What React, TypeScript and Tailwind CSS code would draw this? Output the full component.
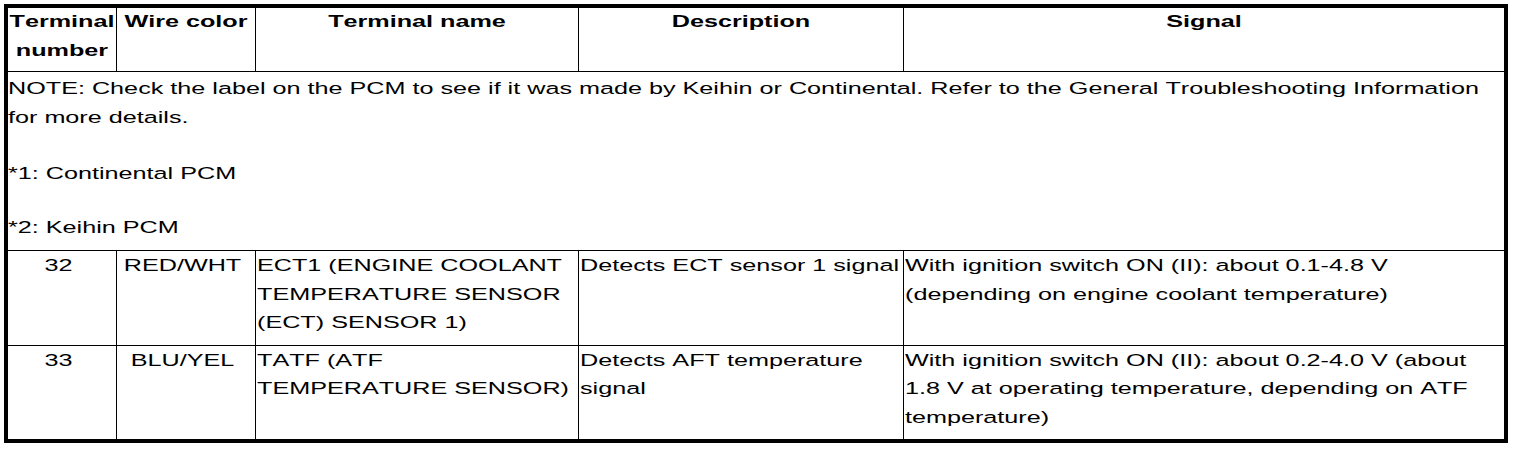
import type { ReactNode } from 'react'

type Row = {
  number: string
  wire: string
  name: string
  description: string
  signal: string
}

const rows: Row[] = [
  {
    number: '32',
    wire: 'RED/WHT',
    name: 'ECT1 (ENGINE COOLANT TEMPERATURE SENSOR (ECT) SENSOR 1)',
    description: 'Detects ECT sensor 1 signal',
    signal: 'With ignition switch ON (II): about 0.1-4.8 V (depending on engine coolant temperature)',
  },
  {
    number: '33',
    wire: 'BLU/YEL',
    name: 'TATF (ATF TEMPERATURE SENSOR)',
    description: 'Detects AFT temperature signal',
    signal:
      'With ignition switch ON (II): about 0.2-4.0 V (about 1.8 V at operating temperature, depending on ATF temperature)',
  },
]

// the manual's text is printed wide, so each cell's text is laid out narrow and stretched back out
function Wide({ children, className = '' }: { children: ReactNode; className?: string }) {
  return (
    <div className={`w-[calc(100%/1.465)] origin-top-left scale-x-[1.465] ${className}`}>
      {children}
    </div>
  )
}

function HeadCell({ children, first = false }: { children: ReactNode; first?: boolean }) {
  return (
    <div className={`pb-[7px] ${first ? '' : 'border-l border-black'}`}>
      <Wide className="-mt-px text-center font-bold">{children}</Wide>
    </div>
  )
}

function Cell({
  children,
  first = false,
  center = false,
}: {
  children: ReactNode
  first?: boolean
  center?: boolean
}) {
  return (
    <div
      className={`border-t border-black pb-[8px] ${first ? '' : 'border-l'} ${
        center ? 'pr-[7px]' : 'pl-[1px]'
      }`}
    >
      <Wide className={center ? 'text-center' : 'text-left'}>{children}</Wide>
    </div>
  )
}

export default function App() {
  return (
    <div className="min-h-[450px] bg-white p-1 font-['Liberation_Sans',Arial,sans-serif] text-[17.2px] leading-[28.5px] text-black [font-kerning:none]">
      <div className="w-[1504px] border-4 border-black">
        <div className="grid grid-cols-[108px_139px_323px_325px_601px]">
          <HeadCell first>Terminal number</HeadCell>
          <HeadCell>Wire color</HeadCell>
          <HeadCell>Terminal name</HeadCell>
          <HeadCell>Description</HeadCell>
          <HeadCell>Signal</HeadCell>

          <div className="col-span-5 border-t border-black pt-[2px] pb-[9px]">
            <Wide>
              <p>
                NOTE: Check the label on the PCM to see if it was made by Keihin or Continental.
                Refer to the General Troubleshooting Information for more details.
              </p>
              <p className="mt-[28px]">*1: Continental PCM</p>
              <p className="mt-[25px]">*2: Keihin PCM</p>
            </Wide>
          </div>

          {rows.map((row) => (
            <div key={row.number} className="contents">
              <Cell first center>
                {row.number}
              </Cell>
              <Cell center>{row.wire}</Cell>
              <Cell>{row.name}</Cell>
              <Cell>{row.description}</Cell>
              <Cell>{row.signal}</Cell>
            </div>
          ))}
        </div>
      </div>
    </div>
  )
}
